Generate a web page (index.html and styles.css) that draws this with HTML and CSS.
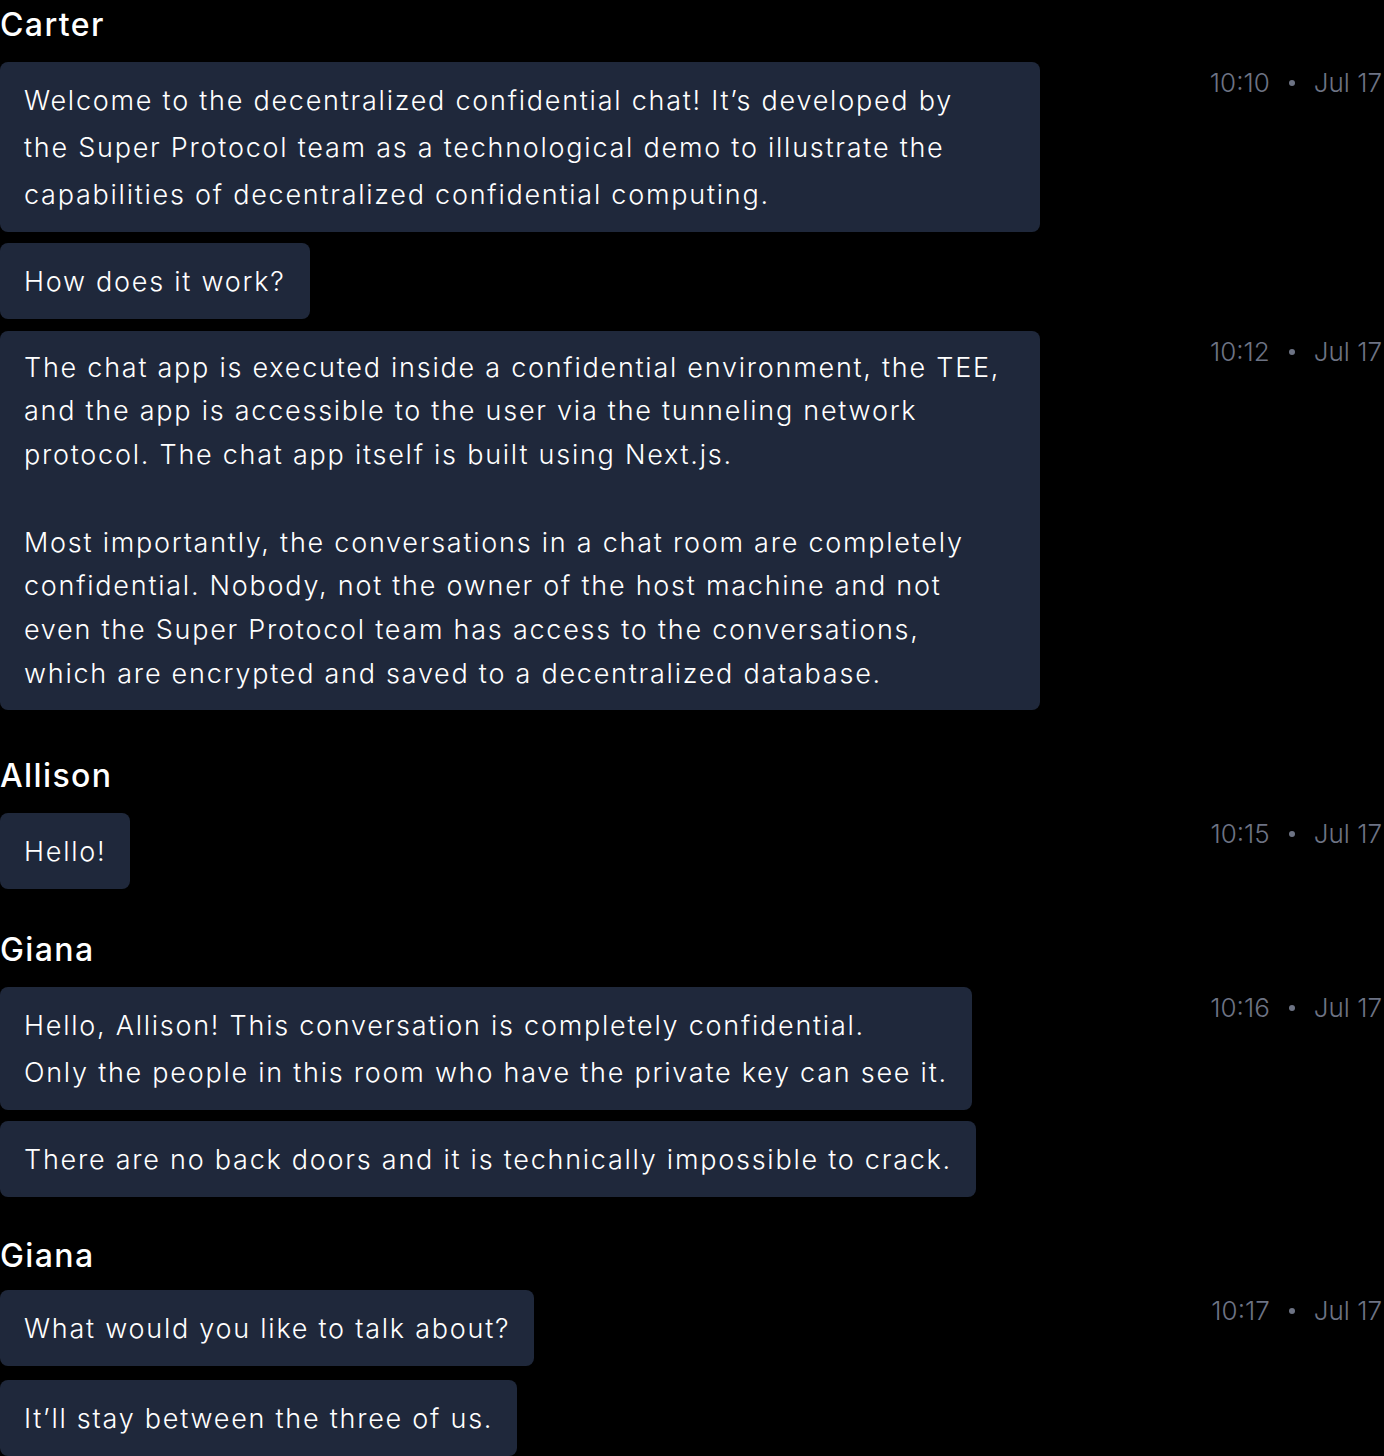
FILE: index.html
```html
<!DOCTYPE html>
<html lang="en">
<head>
<meta charset="utf-8">
<title>Chat</title>
<link rel="stylesheet" href="styles.css">
</head>
<body>
<main class="chat">
  <section class="group">
    <h2 class="author">Carter</h2>
    <div class="row">
      <div class="bubbles">
        <div class="bubble bubble-full">Welcome to the decentralized confidential chat! It’s developed by the Super Protocol team as a technological demo to illustrate the capabilities of decentralized confidential computing.</div>
        <div class="bubble">How does it work?</div>
      </div>
      <div class="time">10:10<span class="dot"></span>Jul 17</div>
    </div>
    <div class="row">
      <div class="bubbles">
        <div class="bubble bubble-full bubble-md">
          <p>The chat app is executed inside a confidential environment, the TEE, and the app is accessible to the user via the tunneling network protocol. The chat app itself is built using Next.js.</p>
          <p>Most importantly, the conversations in a chat room are completely confidential. Nobody, not the owner of the host machine and not even the Super Protocol team has access to the conversations, which are encrypted and saved to a decentralized database.</p>
        </div>
      </div>
      <div class="time">10:12<span class="dot"></span>Jul 17</div>
    </div>
  </section>

  <section class="group">
    <h2 class="author">Allison</h2>
    <div class="row">
      <div class="bubbles">
        <div class="bubble">Hello!</div>
      </div>
      <div class="time">10:15<span class="dot"></span>Jul 17</div>
    </div>
  </section>

  <section class="group">
    <h2 class="author">Giana</h2>
    <div class="row">
      <div class="bubbles">
        <div class="bubble">Hello, Allison! This conversation is completely confidential.<br>Only the people in this room who have the private key can see it.</div>
        <div class="bubble">There are no back doors and it is technically impossible to crack.</div>
      </div>
      <div class="time">10:16<span class="dot"></span>Jul 17</div>
    </div>
  </section>

  <section class="group group-last">
    <h2 class="author">Giana</h2>
    <div class="row">
      <div class="bubbles bubbles-wide">
        <div class="bubble">What would you like to talk about?</div>
        <div class="bubble">It’ll stay between the three of us.</div>
      </div>
      <div class="time">10:17<span class="dot"></span>Jul 17</div>
    </div>
  </section>
</main>
</body>
</html>
```

FILE: styles.css
```css
* {
  box-sizing: border-box;
}

html, body {
  margin: 0;
  padding: 0;
  background: #000;
}

body {
  font-family: Inter, "Noto Sans", "DejaVu Sans", sans-serif;
  color: #fff;
  height: 1456px;
  overflow: hidden;
}

.chat {
  display: flex;
  flex-direction: column;
  gap: 36px;
  width: 1384px;
}

.group {
  display: flex;
  flex-direction: column;
  gap: 12px;
}

.group-last {
  gap: 9px;
  margin-top: -2px;
}

.author {
  margin: 0;
  font-size: 32px;
  line-height: 50px;
  font-weight: 500;
  color: #fff;
  letter-spacing: 1.4px;
}

.row {
  display: flex;
  align-items: flex-start;
  justify-content: space-between;
}

.bubbles {
  display: flex;
  flex-direction: column;
  align-items: flex-start;
  gap: 11px;
  max-width: 1040px;
}

.bubbles-wide {
  gap: 14px;
}

.bubble {
  background: #1f283b;
  border-radius: 8px;
  padding: 14.5px 24px 14.5px 24px;
  font-size: 27px;
  line-height: 47px;
  font-weight: 300;
  letter-spacing: 1.75px;
  color: #fff;
}

.bubble-full {
  width: 1040px;
  padding-right: 39px;
}

.bubble-md {
  line-height: 43.75px;
  margin-bottom: 5px;
}

.bubble-md p {
  margin: 0;
}

.bubble-md p + p {
  margin-top: 43.75px;
}

.time {
  display: flex;
  align-items: center;
  font-size: 26px;
  line-height: 42px;
  font-weight: 300;
  color: #6d7384;
  white-space: nowrap;
  padding-right: 2px;
}

.dot {
  display: inline-block;
  width: 6px;
  height: 6px;
  border-radius: 50%;
  background: #6d7384;
  margin: 0 19px 0 19px;
}
```
